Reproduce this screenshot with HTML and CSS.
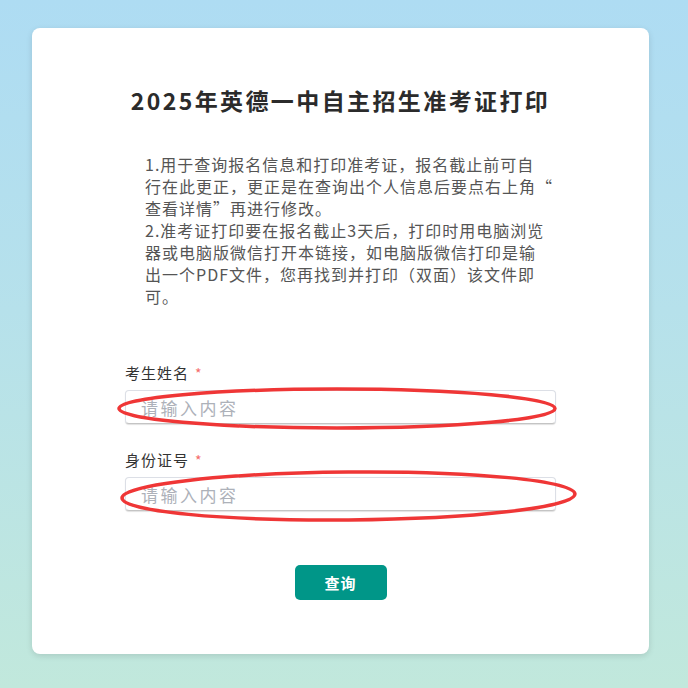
FILE: index.html
```html
<!DOCTYPE html>
<html>
<head>
  <meta charset="utf8" />
  <meta name="viewport" content="width=device-width, initial-scale=1" >
  <title>2025年英德一中自主招生准考证打印</title>
  <link rel="stylesheet" href="styles.css">
</head>
<body>
  <div class="card">
    <h1 class="title">2025年英德一中自主招生准考证打印</h1>
    <div class="notice">
      <p>1.用于查询报名信息和打印准考证，报名截止前可自<br>行在此更正，更正是在查询出个人信息后要点右上角“<br>查看详情”再进行修改。</p>
      <p>2.准考证打印要在报名截止3天后，打印时用电脑浏览<br>器或电脑版微信打开本链接，如电脑版微信打印是输<br>出一个PDF文件，您再找到并打印（双面）该文件即<br>可。</p>
    </div>
    <form class="form">
      <div class="form__item">
        <label class="form__label">考生姓名<span class="required">*</span></label>
        <input class="form__input" type="text" placeholder="请输入内容">
      </div>
      <div class="form__item">
        <label class="form__label">身份证号<span class="required">*</span></label>
        <input class="form__input" type="text" placeholder="请输入内容">
      </div>
      <div class="form__btn">
        <button class="submit" type="button">查询</button>
      </div>
    </form>
    <!-- 红圈标注 -->
    <svg class="marks" width="617" height="626" viewBox="0 0 617 626">
      <ellipse cx="305" cy="380.5" rx="218" ry="19.5" fill="none" stroke="#ef3636" stroke-width="3.5" />
      <ellipse cx="316.5" cy="468" rx="226.5" ry="24" fill="none" stroke="#ef3636" stroke-width="3.5" transform="rotate(-0.5 316.5 468)" />
    </svg>
  </div>
</body>
</html>
```

FILE: styles.css
```css
html{
  height: 100%;
}
body{
  margin: 0;
  min-height: 100%;
  background: linear-gradient(180deg, #aedcf3 0%, #b6e1eb 45%, #c1e8dc 100%);
  font-family: "Noto Sans CJK SC", "Noto Sans", sans-serif;
}
.card{
  position: relative;
  box-sizing: border-box;
  width: 617px;
  height: 626px;
  margin: 0 0 0 32px;
  top: 28px;
  padding: 56px 93px 0;
  background: #fff;
  border-radius: 8px;
  box-shadow: 0 2px 6px rgba(0,0,0,0.12);
}
.title{
  margin: 0;
  text-align: center;
  font-size: 23px;
  line-height: 32px;
  font-weight: bold;
  letter-spacing: 2.4px;
  color: #2b2b2b;
}
.notice{
  margin-top: 37px;
  padding: 0 20px;
  font-size: 16px;
  line-height: 22px;
  letter-spacing: 1px;
  color: #555;
}
.notice p{
  margin: 0;
  white-space: nowrap;
}
.form{
  margin-top: 56px;
}
.form__item{
  margin-bottom: 26px;
}
.form__label{
  display: block;
  font-size: 15px;
  line-height: 20px;
  letter-spacing: 1px;
  color: #333;
  margin-bottom: 7px;
}
.required{
  color: #f56c6c;
  margin-left: 6px;
  font-size: 14px;
}
.form__input{
  display: block;
  box-sizing: border-box;
  width: 100%;
  height: 34px;
  padding: 0 15px;
  border: 1px solid #dcdfe6;
  border-bottom-color: #c4c4c4;
  border-radius: 4px;
  box-shadow: 0 1px 1px rgba(0,0,0,0.12);
  font-family: inherit;
  font-size: 17px;
  letter-spacing: 2.5px;
  outline: none;
}
.form__input::placeholder{
  color: #adb1b9;
}
.form__btn{
  padding-top: 28px;
  text-align: center;
}
.submit{
  width: 92px;
  height: 35px;
  border: none;
  border-radius: 5px;
  background: #009688;
  color: #fff;
  font-family: inherit;
  font-size: 15px;
  font-weight: bold;
  letter-spacing: 1px;
  cursor: pointer;
}
.marks{
  position: absolute;
  left: 0;
  top: 0;
  pointer-events: none;
}
```
